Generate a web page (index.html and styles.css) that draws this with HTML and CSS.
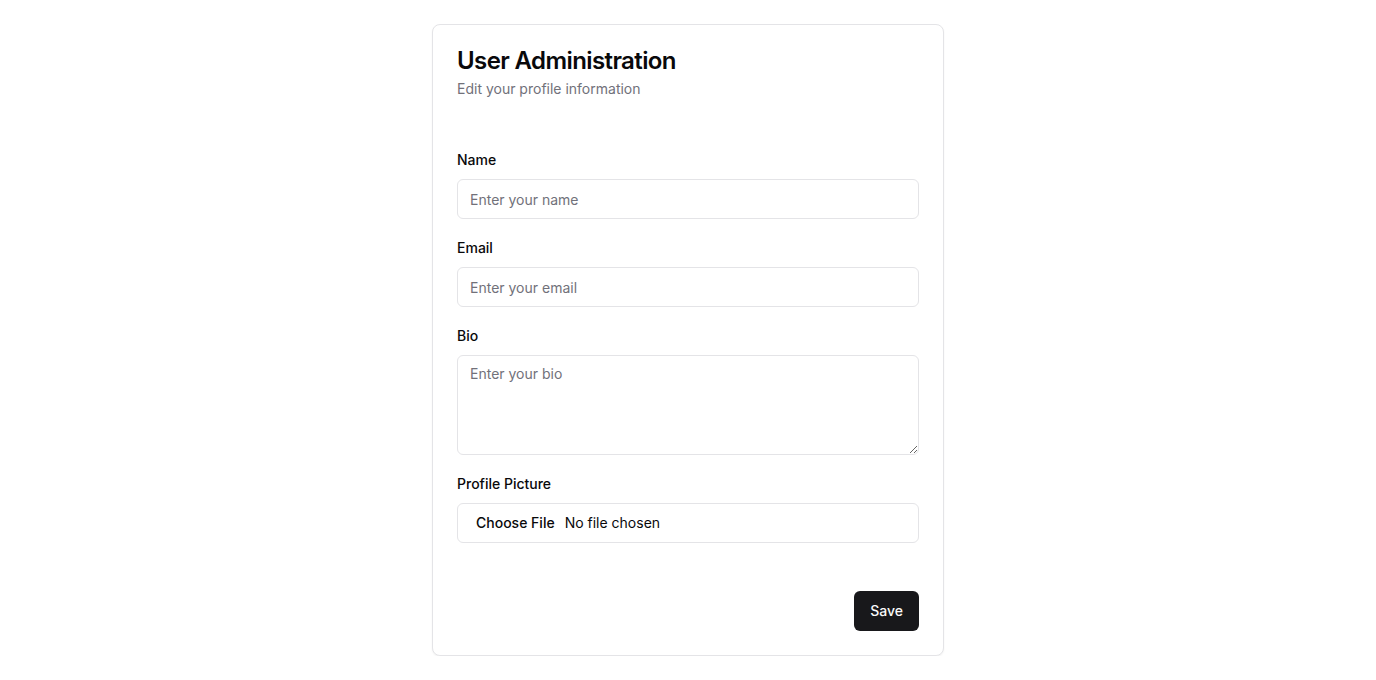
FILE: index.html
```html
<!DOCTYPE html>
<html lang="en">
<head>
<meta charset="utf-8">
<title>User Administration</title>
<link rel="stylesheet" href="styles.css">
</head>
<body>
<main class="page">
  <section class="card">
    <header class="card-header">
      <h1 class="card-title">User Administration</h1>
      <p class="card-desc">Edit your profile information</p>
    </header>
    <form class="form">
      <div class="field">
        <label class="label" for="name">Name</label>
        <input class="input" id="name" type="text" placeholder="Enter your name">
      </div>
      <div class="field">
        <label class="label" for="email">Email</label>
        <input class="input" id="email" type="email" placeholder="Enter your email">
      </div>
      <div class="field">
        <label class="label" for="bio">Bio</label>
        <textarea class="input textarea" id="bio" placeholder="Enter your bio"></textarea>
      </div>
      <div class="field">
        <label class="label" for="pic">Profile Picture</label>
        <input class="input file" id="pic" type="file">
      </div>
      <div class="actions">
        <button class="btn" type="button">Save</button>
      </div>
    </form>
  </section>
</main>
</body>
</html>
```
FILE: styles.css
```css
* { box-sizing: border-box; }
html, body { margin: 0; padding: 0; background: #ffffff; }
body {
  font-family: Inter, "Liberation Sans", sans-serif;
  color: #09090b;
}
.page {
  display: flex;
  justify-content: center;
  padding-top: 24px;
}
.card {
  width: 512px;
  border: 1px solid #e4e4e7;
  border-radius: 8px;
  background: #fff;
  box-shadow: 0 1px 2px 0 rgba(0,0,0,0.05);
  padding: 24px;
}
.card-header { margin: 0; }
.card-title {
  margin: 0;
  font-size: 24px;
  line-height: 24px;
  font-weight: 600;
  letter-spacing: -0.025em;
}
.card-desc {
  margin: 6px 0 0;
  font-size: 14px;
  line-height: 20px;
  color: #71717a;
}
.form {
  margin-top: 51px;
  display: flex;
  flex-direction: column;
  gap: 19px;
}
.field {
  display: flex;
  flex-direction: column;
  gap: 9px;
}
.label {
  font-size: 14px;
  line-height: 20px;
  font-weight: 500;
}
.input {
  display: block;
  width: 100%;
  height: 40px;
  border: 1px solid #e4e4e7;
  border-radius: 6px;
  background: #fff;
  padding: 8px 12px;
  font-family: inherit;
  font-size: 14px;
  line-height: 20px;
  color: #09090b;
  outline: none;
}
.input::placeholder { color: #71717a; }
.textarea {
  height: 100px;
  resize: vertical;
}
.file { padding: 9px 12px 7px; }
.file::file-selector-button {
  border: 0;
  background: transparent;
  font-family: inherit;
  font-size: 14px;
  font-weight: 500;
  color: #09090b;
  padding: 1px 6px;
  margin-inline-end: 4px;
}
.actions {
  display: flex;
  justify-content: flex-end;
  margin-top: 29px;
}
.btn {
  height: 40px;
  padding: 0 16px 2px;
  border: 0;
  border-radius: 6px;
  background: #18181b;
  color: #fafafa;
  font-family: inherit;
  font-size: 14px;
  font-weight: 500;
}
```
